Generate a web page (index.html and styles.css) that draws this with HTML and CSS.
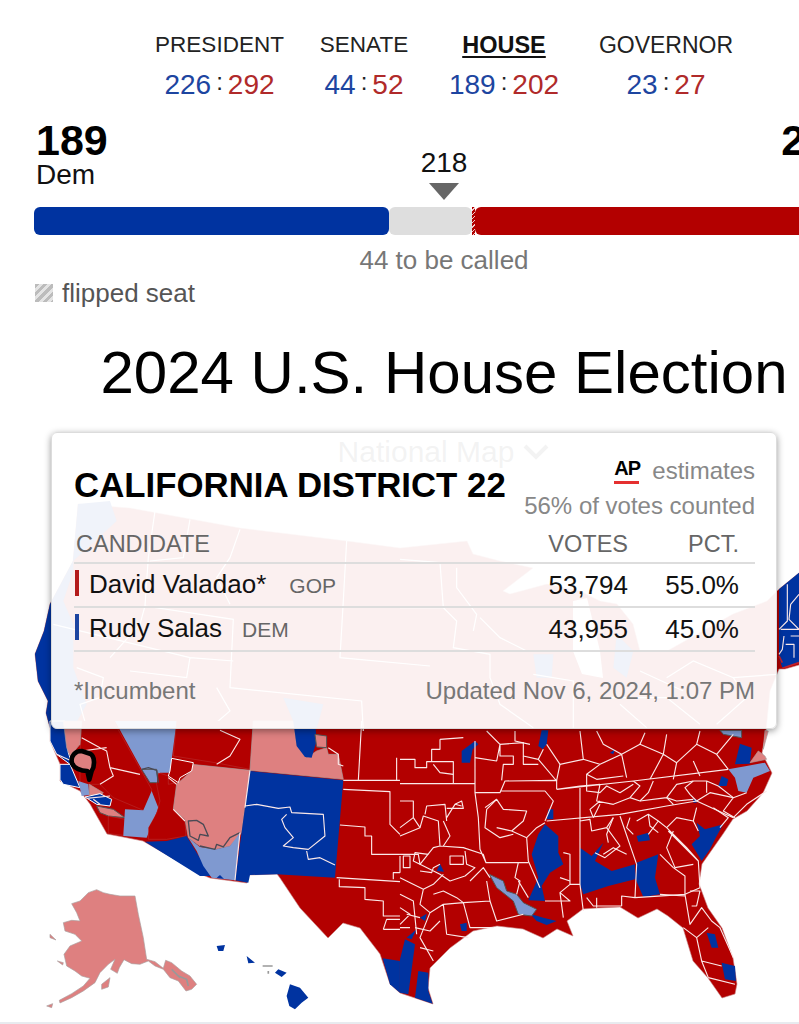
FILE: index.html
```html
<!DOCTYPE html>
<html lang="en">
<head>
<meta charset="utf-8">
<title>2024 U.S. House Election</title>
<link rel="stylesheet" href="styles.css">
</head>
<body>
<main class="page">
  <nav class="races">
    <a class="race race-president"><span class="race-name">PRESIDENT</span><span class="race-score"><b class="dem">226</b><i>:</i><b class="rep">292</b></span></a>
    <a class="race race-senate"><span class="race-name">SENATE</span><span class="race-score"><b class="dem">44</b><i>:</i><b class="rep">52</b></span></a>
    <a class="race race-house"><span class="race-name active">HOUSE</span><span class="race-score"><b class="dem">189</b><i>:</i><b class="rep">202</b></span></a>
    <a class="race race-governor"><span class="race-name">GOVERNOR</span><span class="race-score"><b class="dem">23</b><i>:</i><b class="rep">27</b></span></a>
  </nav>

  <section class="totals">
    <div class="party"><div class="party-count">189</div><div class="party-name">Dem</div></div>
    <div class="majority"><div class="majority-num">218</div><div class="majority-arrow"></div></div>
    <div class="party party-right"><div class="party-count">202</div><div class="party-name">Rep</div></div>
  </section>

  <div class="seat-bar">
    <div class="seg seg-dem"></div>
    <div class="seg seg-open"></div>
    <div class="seg seg-flip"></div>
    <div class="seg seg-rep"></div>
  </div>
  <p class="to-call">44 to be called</p>
  <p class="legend"><span class="swatch"></span>flipped seat</p>

  <h1 class="title">2024 U.S. House Election</h1>

  <section class="map-area">
    <svg class="map" viewBox="0 407 888 617" width="888" height="617" aria-hidden="true">
      <path class="red" d="M78 503L130 507 240 527 347 540 400 547 467 540 473 553 500 560 533 567 503 590 510 593 547 583 580 590 600 600 617 603 633 623 640 650 667 650 733 613 767 600 778 589 799 572 810 572 810 662 799 664 785 668 779 668 770 690 766 730 762 752 772 772 763 792 747 810 733 818 723 833 702 863 699 883 708 907 722 927 733 957 737 983 735 993 722 997 708 977 693 960 683 927 668 915 657 908 638 917 620 906 597 907 583 908 567 920 573 935 557 928 543 937 523 928 497 925 473 930 450 947 430 967 428 987 433 1003 415 997 400 992 390 983 380 953 360 927 343 922 328 937 300 907 280 877 277 873 248 874 247 882 210 877 200 873 143 840 123 836 107 833 90 803 80 790 60 780 60 763 50 740 50 727 46 712 48 700 38 680 35 653 44 630 50 603 73 560Z"/>
      <path class="lake" d="M573 600L587 597 600 650 603 677 582 673 573 650Z"/>
      <g transform="translate(30 490) scale(.3333)">
        <path class="dem-fill" d="M144 39L240 30 260 90 130 210 130 240 100 330 130 400 130 530 170 640 130 711 60 711 48 666 54 630 24 570 15 489 42 420 60 339 129 210Z"/>
        <path class="dem-fill" d="M760 620L880 640 860 715 800 715Z"/>
        <path class="lines-faint" d="M375 60L355 200 345 345 610 385 600 590 995 630 1000 720M480 85L460 200 360 210M630 115L600 200 560 260 600 340M950 150L940 330 930 500 1200 525M610 510L480 500 70 400M480 500L470 560 300 540M140 530L220 560 210 620 150 640 170 710M560 590L600 660 530 720M345 345L330 400 240 500"/>
      </g>
      <g transform="translate(400 490) scale(.3333)">
        <path class="dem-fill" d="M400 490L460 490 455 560 410 560ZM650 430L700 480 680 560 640 530Z"/>
        <path class="lines-faint" d="M0 205L120 215 130 350 170 390 160 470 270 490 270 560 300 640 400 710M170 230L170 290 230 370 220 420M0 350L130 350M400 550L520 570 520 710M240 380L300 440 380 480M660 640L740 710M800 560L880 510 1000 560 1040 620 950 700M600 620L800 620 900 700M1000 560L1130 550M720 540L850 600"/>
      </g>
      <g transform="translate(0 720) scale(.3333)">
        <path class="red" d="M245 0H340L455 205 450 260 430 268 340 230 300 190 240 190 240 100Z"/>
        <path class="dem-fill stroke-w" d="M150 0H195L205 95 215 125 210 130 170 100 150 60Z"/>
        <path class="rep-light" d="M190 0H245L240 70 210 105 200 80Z"/>
        <path class="dem-fill stroke-w" d="M180 130L210 130 240 200 190 190 180 175Z"/>
        <path class="dem-light" d="M235 180L265 190 268 222 245 225Z"/>
        <path class="rep-light" d="M268 190L310 215 300 225 268 222Z"/>
        <path class="dem-fill stroke-w" d="M255 228L300 218 335 235 330 255 290 250Z"/>
        <path class="rep-light stroke-d" d="M290 255L340 265 375 290 325 285 300 275Z"/>
        <path class="red" d="M325 285L375 295 370 343 325 338Z"/>
        <path class="dem-light" d="M375 265L430 268 455 210 475 260 440 350 370 345Z"/>
        <path class="dem-light" d="M345 0H530L510 155 480 155 472 185 450 180 425 145Z"/>
        <path class="dem-light stroke-d" d="M425 145L470 145 475 185 450 185Z"/>
        <path class="red" d="M475 155L505 165 505 190 530 185 525 230 520 265 555 300 558 345 500 355 445 355 445 320 470 275 480 240 470 190Z"/>
        <path class="red" d="M530 0H760L750 145 645 125 520 105Z"/>
        <path class="rep-light" d="M575 130L750 148 725 335 690 375 645 385 600 375 565 350 555 295 520 265 530 190 575 150Z"/>
        <path class="red stroke-w" d="M515 112L580 125 575 150 540 170 535 185 505 165 510 150Z"/>
        <path class="rep-light" d="M760 0H880L890 70 920 110 950 90 980 80 985 100 1015 100 1030 175 750 148Z"/>
        <path class="dem-fill" d="M880 0H945L950 60 935 110 915 108 890 75Z"/>
        <path class="rep-light stroke-d" d="M945 40L980 45 980 80 950 78Z"/>
        <path class="dem-fill" d="M750 150L1030 178 1005 470 830 460 750 462 745 485 705 478 735 260Z"/>
        <path class="dem-fill" d="M435 362L500 360 560 345 590 395 635 465 600 465Z"/>
        <path class="dem-light" d="M565 350L600 378 650 385 690 375 720 335 705 478 635 470 610 435 590 390Z"/>
        <path class="dem-fill" d="M650 470L660 462 672 474Z"/>
        <path class="dem-fill" d="M1148 712L1200 720V815L1170 790Z"/>
        <path class="outline-d" d="M565 300L590 298 610 310 625 345 600 340 595 358 570 345ZM425 145L445 140 470 148 475 185"/>
        <path class="outline-d" d="M600 375L645 385 650 370 670 378 690 350 720 335"/>
        <path class="lines-w" d="M660 28L720 55 690 105 650 130M245 50L300 80 320 90 330 140 420 160M300 190L340 165 330 140M245 90L320 80M170 100L210 118M260 232L330 225M280 235L300 250M750 148L735 260M720 335L705 478M735 255L770 250 835 262 870 258 875 275 970 280 975 345 925 385 880 380 850 375 880 350 855 320 845 295 860 280M920 390L925 415 960 410 1005 432M1030 178H1200M1085 0L1075 180M1190 110V180M1030 205L1170 212V310L1200 340M1020 312L1095 318V345H1115V400H1200M1010 470L1200 482M1018 475V497L1095 500V535L1150 540V585H1200M1150 625L1160 595H1200M1150 625H1200M1180 475V455H1200M505 170L530 190M520 265L555 300M985 80L1015 100V130L1030 135"/>
        <path class="black-ring" d="M245 90C225 90 213 105 215 122C218 142 245 150 262 150L268 176L275 150C285 135 285 105 270 98Z"/>
        <path class="rep-light" d="M290 506L310 515 330 520 360 525 405 525 415 580 430 650 440 715 465 722 490 742 497 718 515 725 545 750 570 765 590 790 575 805 558 810 535 780 510 770 490 745 465 735 445 720 420 730 395 728 372 716 358 740 352 757 332 745 345 715 325 730 300 755 285 785 250 810 215 830 180 846 178 838 215 818 250 795 270 772 245 765 225 750 200 735 192 700 210 675 245 660 225 640 195 630 190 605 215 598 240 600 230 575 215 548 240 540 265 515Z"/>
        <path class="rep-light" d="M305 790L330 770 325 798 305 805ZM150 640L168 657 150 650ZM172 720L190 725 188 732ZM140 855L158 848 155 860Z"/>
        <path class="small-gray" d="M515 745L540 770M535 765L560 775 565 795"/>
        <path class="dem-fill" d="M870 790L900 800 925 830 905 845 885 865 868 855 860 825ZM835 745L860 755 845 768 825 755ZM740 705L765 725 745 727ZM650 675L675 672 670 690 655 690Z"/>
        <path class="small-gray" d="M788 735H818M805 750V758"/>
      </g>
      <g transform="translate(400 720) scale(.3333)">
        <path class="dem-fill" d="M435 310L475 345 475 395 490 430 450 455 425 495 435 540 385 538 415 470 395 400 415 340Z"/>
        <path class="dem-fill" d="M540 380L575 405 610 365 585 420 635 450 705 430 705 475 625 495 550 520 540 490Z"/>
        <path class="dem-fill" d="M710 425L775 400 765 470 780 520 730 528 705 470Z"/>
        <path class="dem-fill" d="M890 305L915 325 970 310 950 345 930 385 905 420 875 370 900 345Z"/>
        <path class="dem-fill" d="M1005 130L1020 68 1055 80 1050 128Z"/>
        <path class="dem-fill" d="M185 90L225 60 235 70 218 85 210 125 185 125Z"/>
        <path class="dem-fill" d="M425 28H445L440 70 428 85 415 75Z"/>
        <path class="dem-fill" d="M965 165L985 175 980 195 955 195Z"/>
        <path class="dem-fill" d="M920 635L945 640 955 680 935 680Z"/>
        <path class="dem-fill" d="M965 725L1005 735 1008 780 975 775Z"/>
        <path class="dem-fill" d="M15 655L45 670 25 820 0 815V715Z"/>
        <path class="dem-fill" d="M55 750L85 755 85 810 98 848 45 830Z"/>
        <path class="dem-fill" d="M445 265H460V295H440Z"/>
        <path class="dem-fill" d="M390 578L430 590 470 600 440 612 410 600Z"/>
        <path class="dem-fill" d="M710 345L745 335 750 358 715 362ZM110 450L120 428 132 452ZM180 610L200 605 200 630 185 630ZM60 590L80 578 75 600ZM20 650L50 625 35 655ZM630 95L645 85 640 100ZM880 235H890V245H880Z"/>
        <path class="dem-light" d="M985 145L1040 135 1095 125 1110 150 1060 170 1040 215 1015 210 1005 170Z"/>
        <path class="dem-light stroke-d" d="M268 460L310 480 320 510 350 520 370 545 410 565 395 585 355 580 340 540 290 500Z"/>
        <path class="dem-light stroke-d" d="M960 28H1025L1025 50 970 40Z"/>
        <path class="rep-light" d="M1050 125L1075 90 1095 105 1100 115ZM1095 28L1105 30 1090 85Z"/>
        <path class="lines-w" d="M0 115H45V140H80V122H160V188M0 188H225M225 60V215L235 290 240 385 258 425H385M225 215H300L315 180 470 178V205M120 55V85H95V120M120 55L190 50M300 70L370 65V105L415 115 470 180M415 115L430 85M470 205L700 180 985 145M440 300L660 280 800 255 890 240 1000 290M435 300L460 240 435 210H300M540 195V295L540 490 550 570M660 285L710 430 705 530M895 420L805 330M855 520L705 530 665 525V555M590 530V560M540 300L570 295 575 330 620 320 640 290M620 320L660 375 615 410 585 395M710 300L745 280 775 300 745 340M775 300L800 320 860 380 895 420 900 500M800 320L830 290 880 300M855 520L900 500M855 520L870 610 905 560 935 600 960 620 1000 710M850 620L890 650 925 620M890 650L905 720 925 770M905 720L965 735M925 770L1005 790M1005 290L970 270 1000 230 1040 215M890 240L930 215 1000 230M820 250L800 230 830 190 880 180M880 180L920 180 955 195M700 180L720 195 690 230 720 240 800 230M600 190L590 240 640 250 690 230M600 240L570 265 580 290M540 195L600 190M470 205L540 195M440 70L480 130 550 115 600 130 665 100 720 70 790 100 830 125 890 70 900 30M550 115L540 30M665 100L680 170M790 100L750 175M600 130L560 160 590 175 670 165M890 70L950 100 985 145M950 100L1000 40M255 260L290 235 310 265 380 270 370 300 335 330 380 350 385 420M290 320L335 330M355 425L345 470 360 480 350 520M0 400H55L60 430 100 380 120 375 190 380 250 400 258 425M195 390L200 430 225 440 195 465 150 480 120 460 60 430M0 405V455M120 375L115 300 70 285 60 320 0 345M140 300L135 250 80 255 75 280M140 290L165 250 185 255M0 470L70 505 100 490 130 460M70 505L60 550 90 575 130 550 190 545 270 540M90 575L60 650 100 720M130 550L140 640 205 650M190 545L210 620 280 620M270 540L290 600 370 580M270 540L260 480M0 520L40 540 50 640M435 540H510L480 515 510 490 540 490M510 490V400L490 395M385 420L420 500M480 515L490 590M210 480L250 440 270 470M1000 290L1040 250 1100 210"/>
        <path class="lines-w" d="M300 70V105H340V130H310L305 178M370 105V130H415M0 240H40V290L0 320M40 290L60 320M130 300L150 345 130 375M165 250L185 240 190 262H140M60 430L40 420 45 395 85 400M120 430L100 440 95 455 60 450M150 405H190V430H150ZM10 405H30V440H10ZM100 520L130 510 170 530 190 545M20 580L60 590M45 620L90 630 120 600M290 235L260 265 255 320 300 350 340 340M480 130L470 178M560 160V210L600 215 620 195 660 215 700 190M580 290L600 250M720 240L745 215 760 180M800 230L830 240 880 235M880 180L855 200 870 220 890 240M920 180V215M955 195L1000 230M940 260L985 290 960 320M890 260L880 300 895 330M690 290L680 320 700 340M745 280L750 315 775 335M640 290L620 340 625 365M680 400L640 380 610 400M820 330L800 380 825 440 880 430M780 400L820 440 855 465V520M780 520L855 525M870 510H900L890 555 875 555M560 530L580 555H665M480 470L510 480M355 480L385 530M380 350L410 320 435 305M0 620H30M60 680L100 690M0 560L30 580 0 610M100 130L120 155 160 160M225 110L290 120 300 70M260 30L300 70M345 30V60L390 70M590 30L610 70 665 100M720 70L735 35M790 100L800 40M830 125L820 175M880 120L900 165"/>
      </g>
      <g transform="translate(719 560) scale(.3333)">
        <path class="dem-fill" d="M180 85L240 35V305L190 320 180 290Z"/>
        <path class="lines-w" d="M205 70V180L180 205M240 100L215 130 210 175 240 205M185 205H240M195 225L190 265 180 280M200 250H225V290M215 225H240"/>
        <path class="rep-stroke" d="M180 285L190 305M190 322L240 305"/>
      </g>
    </svg>
    <div class="map-heading"><span>National Map</span><svg class="chevron" viewBox="0 0 28 16" width="28" height="16" aria-hidden="true"><path d="M3 2L14 13 25 2"/></svg></div>

    <aside class="tip">
      <header class="tip-head">
        <h2 class="tip-title">CALIFORNIA DISTRICT 22</h2>
        <div class="tip-source">
          <div class="tip-ap"><span class="ap-logo">AP</span><span>estimates</span></div>
          <div>56% of votes counted</div>
        </div>
      </header>
      <div class="tip-table">
        <div class="tip-row tip-row-head"><span>CANDIDATE</span><span class="num">VOTES</span><span class="num">PCT.</span></div>
        <div class="tip-row"><span class="cand cand-rep">David Valadao*<small class="cand-party party-gop">GOP</small></span><span class="num">53,794</span><span class="num">55.0%</span></div>
        <div class="tip-row"><span class="cand cand-dem">Rudy Salas<small class="cand-party">DEM</small></span><span class="num">43,955</span><span class="num">45.0%</span></div>
      </div>
      <footer class="tip-foot"><span>*Incumbent</span><span>Updated Nov 6, 2024, 1:07 PM</span></footer>
    </aside>
  </section>
</main>
</body>
</html>
```

FILE: styles.css
```css
* { box-sizing: border-box; }
html, body { margin: 0; padding: 0; height: 1024px; overflow: hidden; background: #fff; }
body { font-family: "Liberation Sans", Arial, sans-serif; color: #000; }
.page { width: 888px; height: 1024px; overflow: hidden; }

/* race navigation */
.races { display: flex; height: 102px; padding-top: 29px; }
.race { display: flex; flex-direction: column; align-items: center; }
.race-president { margin-left: 155px; width: 129px; }
.race-senate { margin-left: 36px; width: 88px; }
.race-house { margin-left: 41px; width: 110px; }
.race-governor { margin-left: 40px; width: 134px; }
.race-name { font-size: 22.5px; line-height: 32px; height: 32px; color: #222; white-space: nowrap; }
.race-governor .race-name { font-size: 23px; }
.race-name.active { font-size: 23.5px; font-weight: 700; color: #111; text-decoration: underline; text-decoration-thickness: 2px; text-underline-offset: 3px; }
.race-score { margin-top: 7px; display: flex; font-size: 28px; line-height: 34px; white-space: nowrap; }
.race-score b { font-weight: 400; }
.race-score i { font-style: normal; font-size: 24px; line-height: 28px; margin: 0 5px; color: #222; }
.dem { color: #1d45a0; }
.rep { color: #b02a2a; }

/* totals */
.totals { display: flex; justify-content: space-between; margin-top: 19px; padding: 0 35px; height: 68px; }
.party { width: 72px; padding-left: 1px; }
.party-count { font-size: 43px; line-height: 39px; font-weight: 700; }
.party-name { font-size: 28px; line-height: 30px; color: #111; }
.party-right { text-align: right; padding: 0; }
.party-right .party-name { margin-right: -20px; }
.majority { display: flex; flex-direction: column; align-items: center; padding-top: 26px; }
.majority-num { font-size: 28px; line-height: 32px; color: #111; }
.majority-arrow { margin-top: 4px; width: 0; height: 0; border-left: 15px solid transparent; border-right: 15px solid transparent; border-top: 17px solid #666; }

/* seat bar */
.seat-bar { display: flex; margin: 18px 34px 0; height: 28px; }
.seg { height: 100%; }
.seg-dem { flex: 0 0 355px; background: #0033a0; border-radius: 6px; }
.seg-open { flex: 0 0 83px; background: #dedede; border-radius: 6px; }
.seg-flip { flex: 0 0 3px; background: repeating-linear-gradient(135deg, #b00000 0 2px, #f4c9c9 2px 3px); }
.seg-rep { flex: 1; background: #b30000; border-radius: 6px; }
.to-call { margin: 10px 0 0; text-align: center; font-size: 26px; line-height: 30px; color: #777; }
.legend { display: flex; align-items: center; margin: 3px 0 0 35px; font-size: 26px; line-height: 30px; color: #555; }
.swatch { width: 18px; height: 18px; margin-right: 9px; background: repeating-linear-gradient(135deg, #bcbcbc 0 3px, #e4e4e4 3px 6px); }
.title { margin: 30px 0 0; text-align: center; font-size: 60px; line-height: 70px; font-weight: 400; color: #000; }

/* map */
.map-area { position: relative; height: 617px; padding-top: 26px; }
.map-area::after { content: ""; position: absolute; left: 0; right: 0; bottom: 1px; height: 2px; background: #e8ebef; }
.map { position: absolute; left: 0; top: 0; display: block; }
.map-heading { position: relative; display: flex; justify-content: center; align-items: center; gap: 8px; font-size: 30px; line-height: 36px; color: #333; }
.chevron path { fill: none; stroke: #333; stroke-width: 4; }
.red { fill: #b30000; stroke: #c98a8a; stroke-width: .6; }
.lake { fill: #fff; }
.dem-fill { fill: #0033a0; }
.dem-light { fill: #7f99d0; }
.rep-light { fill: #de8080; stroke: #a9a0a0; stroke-width: 2; }
.stroke-w { stroke: #fff; stroke-width: 3; }
.stroke-d { stroke: #555; stroke-width: 3; }
.lines-w { fill: none; stroke: #fbe9e9; stroke-width: 3.4; stroke-linejoin: round; }
.lines-faint { fill: none; stroke: #fff; stroke-width: 3.6; }
.outline-d { fill: none; stroke: #4a4a55; stroke-width: 4; stroke-linejoin: round; }
.black-ring { fill: #de8080; stroke: #000; stroke-width: 14; stroke-linejoin: round; }
.small-gray { fill: none; stroke: #999; stroke-width: 5; }
.rep-stroke { fill: none; stroke: #c0202a; stroke-width: 5; }

/* tooltip */
.tip { position: absolute; left: 51px; top: 24px; width: 726px; height: 297px; padding: 0 21px 0 22px; background: rgba(255, 255, 255, .94); border: 1px solid #dcdcdc; border-radius: 6px; box-shadow: 0 2px 7px rgba(0, 0, 0, .4); }
.tip-head { display: flex; justify-content: space-between; height: 98px; padding-top: 22px; }
.tip-title { margin: 10px 0 0; font-size: 34.8px; line-height: 40px; font-weight: 700; white-space: nowrap; }
.tip-source { font-size: 24px; line-height: 35px; color: #888; text-align: right; }
.tip-ap { display: flex; justify-content: flex-end; align-items: center; gap: 13px; height: 35px; margin-top: -2px; }
.ap-logo { width: 25px; height: 26px; font-size: 20px; line-height: 20px; font-weight: 700; color: #000; text-align: center; border-bottom: 3px solid #e53030; letter-spacing: -1px; }
.tip-table { font-size: 26px; }
.tip-row { display: grid; grid-template-columns: 1fr 80px 111px; height: 44px; padding-right: 16px; border-bottom: 2px solid #dddddd; align-items: center; line-height: 30px; color: #111; }
.tip-row-head { height: 33px; font-size: 23.5px; line-height: 26px; color: #666; padding-left: 2px; align-items: start; }
.num { text-align: right; }
.cand { position: relative; padding-left: 15px; white-space: nowrap; }
.cand::before { content: ""; position: absolute; left: 1px; top: 1px; width: 4px; height: 26px; }
.cand-rep::before { background: #b31b1b; }
.cand-dem::before { background: #1d45a0; }
.cand-party { margin-left: 20px; font-size: 21px; color: #666; }
.cand-party.party-gop { margin-left: 23px; }
.tip-foot { display: flex; justify-content: space-between; margin-top: 24px; font-size: 24px; line-height: 30px; color: #777; }
```
